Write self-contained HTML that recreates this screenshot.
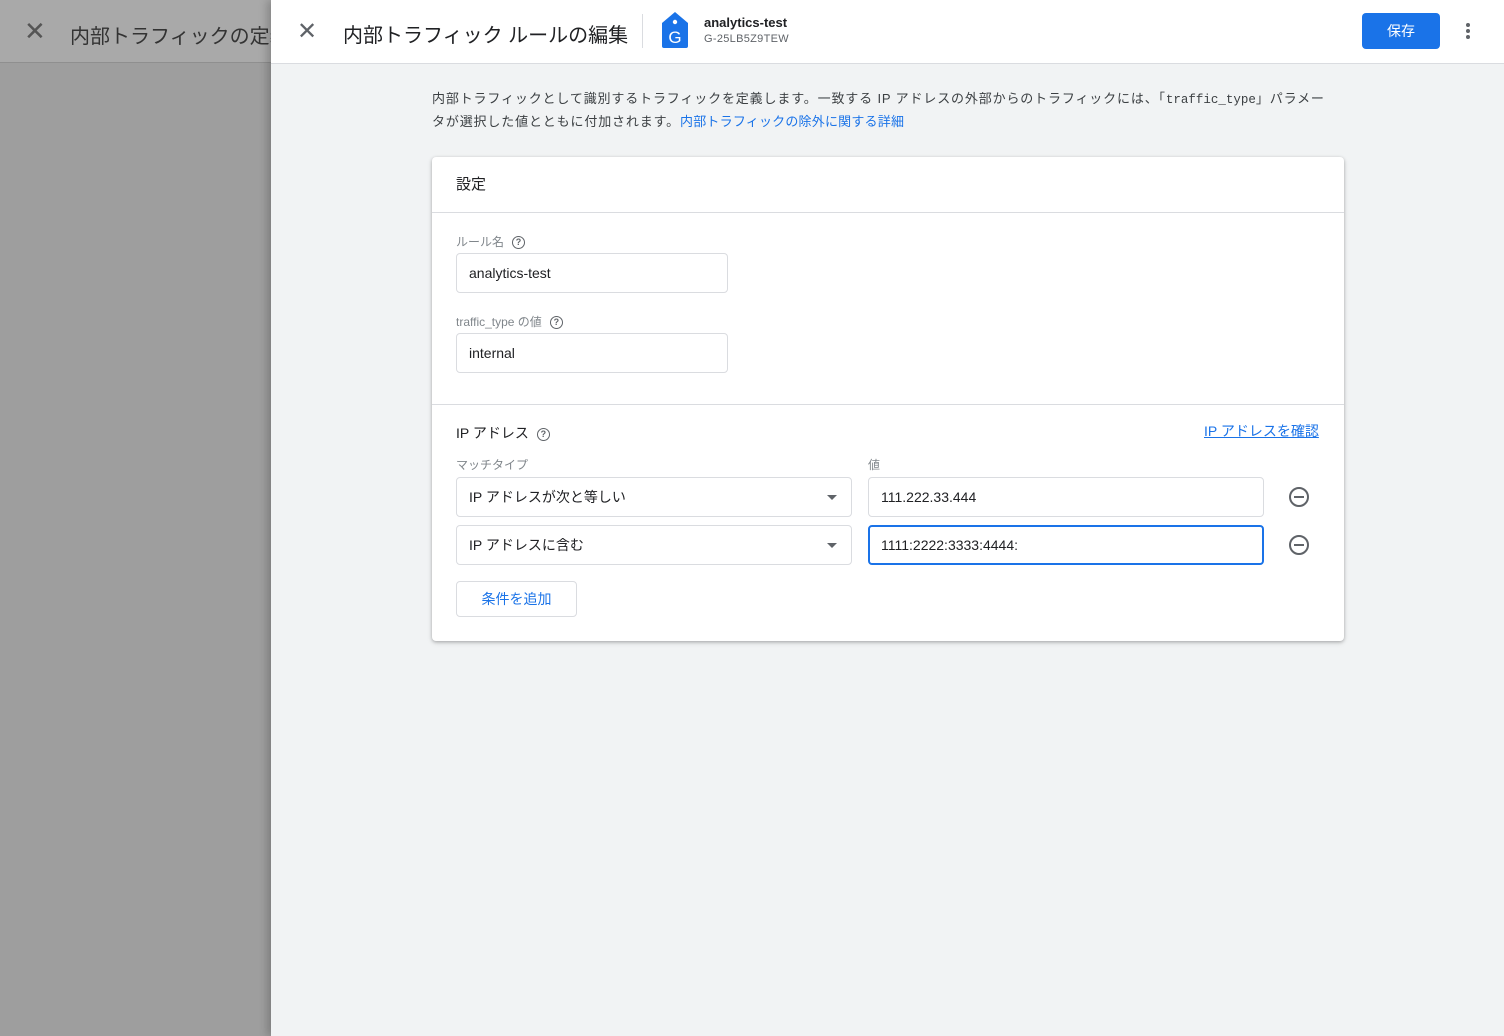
<!DOCTYPE html>
<html><head><meta charset="utf-8"><style>
*{box-sizing:border-box;margin:0;padding:0}
body{width:1504px;height:1036px;overflow:hidden;font-family:"Liberation Sans","Noto Sans CJK JP",sans-serif;background:#f1f3f4;position:relative;color:#202124}
.abs{position:absolute}
.left{left:0;top:0;width:271px;height:1036px;background:#9e9e9e}
.lefth{left:0;top:0;width:271px;height:63px;background:#a9a9a9;border-bottom:1px solid #8f8f8f;overflow:hidden;white-space:nowrap}
.panel{left:271px;top:0;width:1233px;height:1036px;background:#f1f3f4;box-shadow:-4px 0 8px rgba(0,0,0,.2)}
.head{left:271px;top:0;width:1233px;height:64px;background:#fff;border-bottom:1px solid #dadce0}
.card{left:432px;top:157px;width:912px;height:484px;background:#fff;border-radius:4px;box-shadow:0 1px 3px rgba(0,0,0,.25),0 2px 6px rgba(0,0,0,.1)}
.inp{position:absolute;border:1px solid #dadce0;border-radius:4px;background:#fff;font-size:14px;padding-left:12px;display:flex;align-items:center;color:#202124}
.lbl{position:absolute;font-size:12px;color:#80868b}
.q{display:inline-block;width:13px;height:13px;border:1.5px solid #5f6368;border-radius:50%;font-size:9px;line-height:10px;text-align:center;color:#5f6368;font-weight:bold;vertical-align:middle;margin-left:8px}
.arrow{position:absolute;right:14px;top:17px;width:0;height:0;border-left:5px solid transparent;border-right:5px solid transparent;border-top:5px solid #5f6368}
.minus{position:absolute;width:20px;height:20px;border:2px solid #5f6368;border-radius:50%}
.minus:after{content:"";position:absolute;left:3px;top:7px;width:10px;height:2px;background:#5f6368}
</style></head><body>
<div class="abs left"></div>
<div class="abs lefth"><span class="abs" style="left:24px;top:16px;font-size:26px;color:#555;font-weight:300">✕</span><span class="abs" style="left:70px;top:20px;font-size:20px;color:#333">内部トラフィックの定義</span></div>
<div class="abs panel"></div>
<div class="abs head">
<span class="abs" style="left:26px;top:17px;font-size:24px;color:#5f6368;font-weight:300">✕</span>
<span class="abs" style="left:72px;top:19px;font-size:20px;color:#202124">内部トラフィック ルールの編集</span>
<div class="abs" style="left:371px;top:14px;width:1px;height:34px;background:#dadce0"></div>
<svg class="abs" style="left:390px;top:11px" width="28" height="38" viewBox="0 0 28 38"><path d="M14 1 L27 12 V35 a2 2 0 0 1 -2 2 H3 a2 2 0 0 1 -2 -2 V12 Z" fill="#1a73e8"/><circle cx="14" cy="11" r="2.2" fill="#fff"/><text x="14" y="32" font-size="17" fill="#fff" text-anchor="middle" font-family="Liberation Sans">G</text></svg>
<span class="abs" style="left:433px;top:15px;font-size:13px;font-weight:bold;color:#202124">analytics-test</span>
<span class="abs" style="left:433px;top:33px;font-size:11px;color:#5f6368;letter-spacing:.3px">G-25LB5Z9TEW</span>
<div class="abs" style="left:1091px;top:13px;width:78px;height:36px;background:#1a73e8;border-radius:4px;color:#fff;font-size:14px;text-align:center;line-height:36px">保存</div>
<div class="abs" style="left:1195px;top:23px;width:4px;height:4px;border-radius:50%;background:#5f6368;box-shadow:0 6px 0 #5f6368,0 12px 0 #5f6368"></div>
</div>
<div class="abs" style="left:432px;top:88px;width:906px;font-size:13px;line-height:21px;color:#3c4043;letter-spacing:.85px">内部トラフィックとして識別するトラフィックを定義します。一致する IP アドレスの外部からのトラフィックには、「<span style="font-family:'Liberation Mono',monospace;font-size:12.5px;letter-spacing:0">traffic_type</span>」パラメータが選択した値とともに付加されます。<span style="color:#1a73e8;letter-spacing:.2px">内部トラフィックの除外に関する詳細</span></div>
<div class="abs card">
<div class="abs" style="left:24px;top:16px;font-size:15px">設定</div>
<div class="abs" style="left:0;top:55px;width:912px;height:1px;background:#dadce0"></div>
<div class="lbl" style="left:24px;top:76px">ルール名<span class="q">?</span></div>
<div class="inp" style="left:24px;top:96px;width:272px;height:40px">analytics-test</div>
<div class="lbl" style="left:24px;top:156px">traffic_type の値<span class="q">?</span></div>
<div class="inp" style="left:24px;top:176px;width:272px;height:40px">internal</div>
<div class="abs" style="left:0;top:247px;width:912px;height:1px;background:#dadce0"></div>
<div class="abs" style="left:24px;top:266px;font-size:14px;color:#202124">IP アドレス<span class="q">?</span></div>
<div class="abs" style="left:772px;top:264px;font-size:14px;color:#1a73e8;text-decoration:underline">IP アドレスを確認</div>
<div class="lbl" style="left:24px;top:299px">マッチタイプ</div>
<div class="lbl" style="left:436px;top:299px">値</div>
<div class="inp" style="left:24px;top:320px;width:396px;height:40px">IP アドレスが次と等しい<div class="arrow"></div></div>
<div class="inp" style="left:436px;top:320px;width:396px;height:40px">111.222.33.444</div>
<div class="minus" style="left:857px;top:330px"></div>
<div class="inp" style="left:24px;top:368px;width:396px;height:40px">IP アドレスに含む<div class="arrow"></div></div>
<div class="inp" style="left:436px;top:368px;width:396px;height:40px;border:2px solid #1a73e8;padding-left:11px">1111:2222:3333:4444:</div>
<div class="minus" style="left:857px;top:378px"></div>
<div class="abs" style="left:24px;top:424px;width:121px;height:36px;border:1px solid #dadce0;border-radius:4px;color:#1a73e8;font-size:14px;text-align:center;line-height:34px">条件を追加</div>
</div>
</body></html>
